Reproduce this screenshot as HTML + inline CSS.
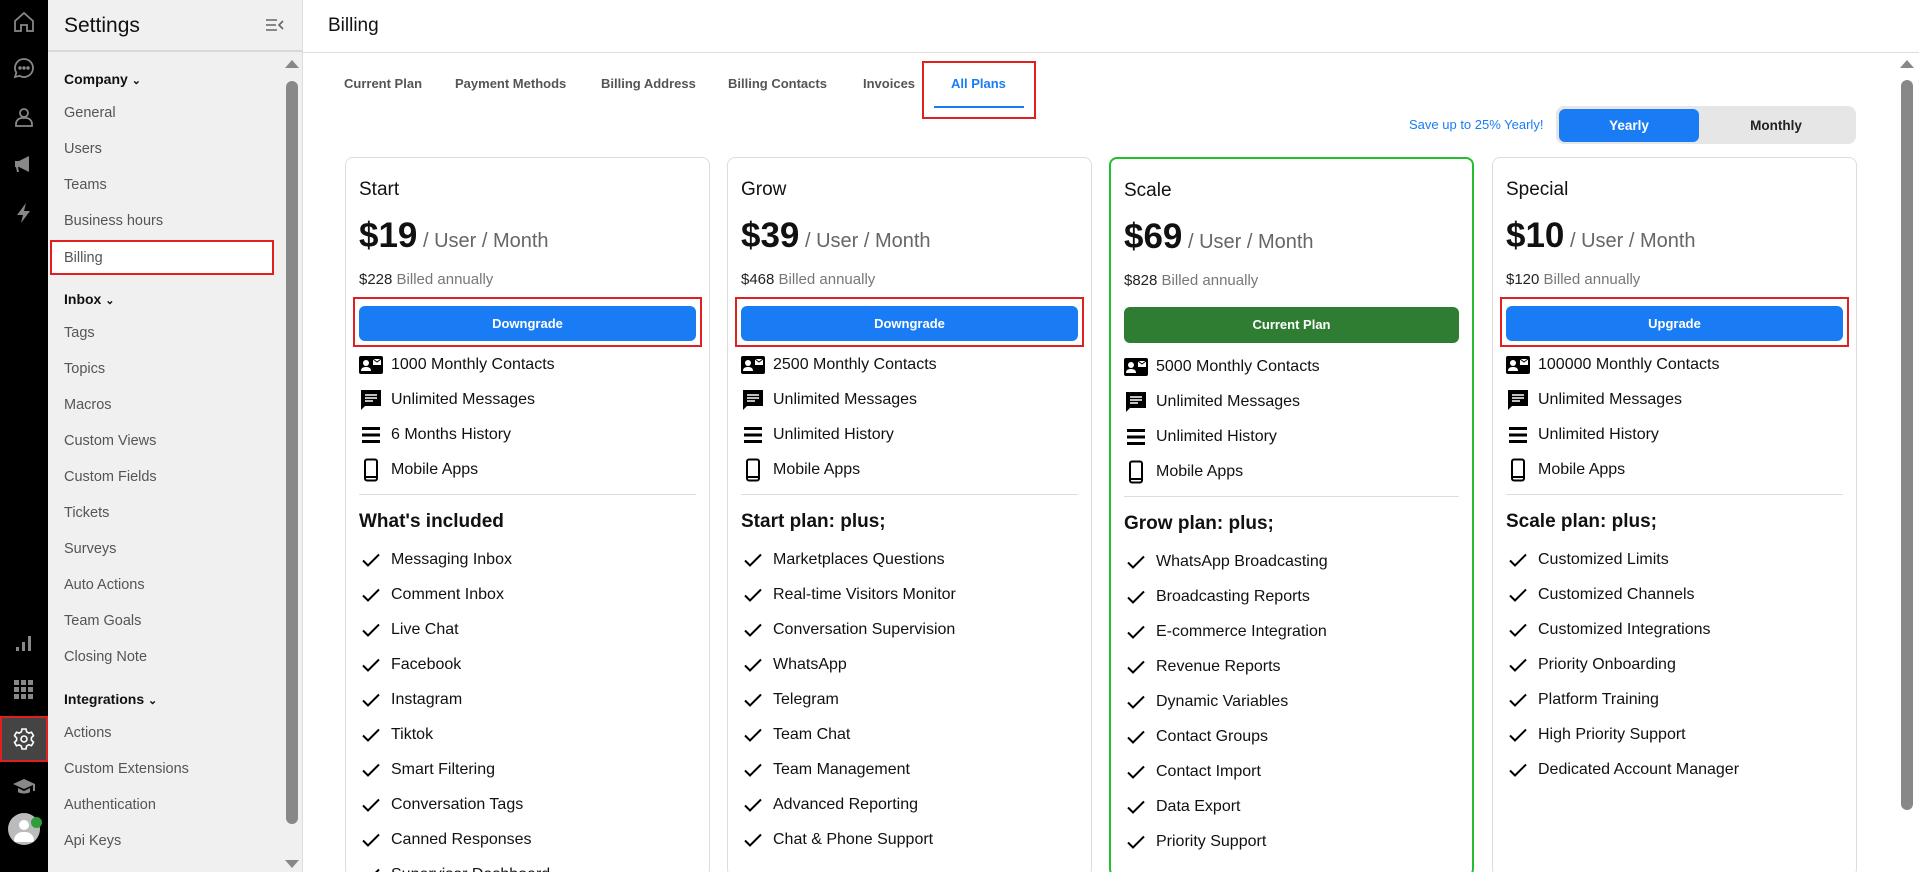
<!DOCTYPE html>
<html style="width:1919px;height:872px;overflow:hidden"><head><meta charset="utf-8"><style>
*{box-sizing:border-box;margin:0;padding:0}
body{width:1919px;height:872px;overflow:hidden;font-family:"Liberation Sans",Arial,sans-serif;background:#fff;position:relative;color:#111}
.rail{position:absolute;left:0;top:0;width:48px;height:872px;background:#000}
.rail svg{position:absolute;left:12px;width:24px;height:24px}
.side{position:absolute;left:48px;top:0;width:255px;height:872px;background:#f0f0f0;border-right:1px solid #ddd;overflow:hidden}
.side .hd{height:52px;border-bottom:2px solid #d8d8d8;font-size:21px;padding:14px 0 0 16px;color:#111}
.side .it{position:absolute;left:16px;font-size:14.5px;color:#555;transform:translateY(-50%)}
.side .grp{position:absolute;left:16px;font-size:14px;font-weight:bold;color:#111;transform:translateY(-50%)}
.main{position:absolute;left:303px;top:0;right:0;height:872px}
.mh{height:53px;border-bottom:1px solid #ddd;font-size:19px;padding:15px 0 0 25px}
.tab{position:absolute;top:76px;font-size:13px;font-weight:bold;color:#555}
.card{position:absolute;top:157px;width:365px;height:720px;border:1px solid #ddd;border-radius:8px;padding:0 13px;overflow:hidden}
.t{margin-top:21px;height:24px;font-size:19px}
.p{height:44px;margin-top:13px;font-size:35px;font-weight:bold;white-space:nowrap}
.p span{font-size:20px;color:#666;font-weight:normal}
.b{height:20px;margin-top:11px;font-size:15px;color:#222}
.b span{color:#777}
.btn{margin-top:15px;height:35px;border-radius:6px;background:#1a7cf5;color:#fff;font-weight:bold;font-size:13px;text-align:center;line-height:35px}
.f{height:35px;display:flex;align-items:center;font-size:16px;color:#111}
.f svg{width:24px;height:24px;margin-right:8px;flex:none}
.fs{margin-top:6px}
.dv{height:1px;background:#ddd;margin-top:7px}
.h{margin-top:13px;height:28px;line-height:28px;font-size:19px;font-weight:bold}
.rb{position:absolute;border:2px solid #e02020}
</style></head><body>
<div class="rail">
<svg style="top:10px" viewBox="0 0 24 24" fill="none" stroke="#888" stroke-width="1.8"><path d="M3 11 12 3l9 8v10h-6v-6H9v6H3z"/></svg>
<svg style="top:56px" viewBox="0 0 24 24" fill="none" stroke="#888" stroke-width="1.8"><path d="M12 3a9 9 0 1 1-4.5 16.8L3 21l1.3-4.3A9 9 0 0 1 12 3z"/><circle cx="8" cy="12" r=".8" fill="#888"/><circle cx="12" cy="12" r=".8" fill="#888"/><circle cx="16" cy="12" r=".8" fill="#888"/></svg>
<svg style="top:105px" viewBox="0 0 24 24" fill="none" stroke="#888" stroke-width="1.8"><circle cx="12" cy="8" r="4"/><path d="M4 21v-2a6 6 0 0 1 6-6h4a6 6 0 0 1 6 6v2z"/></svg>
<svg style="top:152px" viewBox="0 0 24 24" fill="#888"><path d="M3 9h4l10-5v16L7 15H6l1 5H5l-1-5H3z"/></svg>
<svg style="top:201px" viewBox="0 0 24 24" fill="#888"><path d="M14 2 5 14h6l-2 8 9-12h-6z"/></svg>
<svg style="top:631px" viewBox="0 0 24 24" fill="#888"><rect x="4" y="16" width="3" height="4"/><rect x="10" y="11" width="3" height="9"/><rect x="16" y="5" width="3" height="15"/></svg>
<svg style="top:678px" viewBox="0 0 24 24" fill="#888"><rect x="2" y="2" width="5" height="5"/><rect x="9" y="2" width="5" height="5"/><rect x="16" y="2" width="5" height="5"/><rect x="2" y="9" width="5" height="5"/><rect x="9" y="9" width="5" height="5"/><rect x="16" y="9" width="5" height="5"/><rect x="2" y="16" width="5" height="5"/><rect x="9" y="16" width="5" height="5"/><rect x="16" y="16" width="5" height="5"/></svg>
<div style="position:absolute;left:0;top:716px;width:48px;height:46px;background:#444;border:2px solid #e02020"></div>
<svg style="top:727px" viewBox="0 0 24 24" fill="none" stroke="#fff" stroke-width="1.6"><path d="M10 2h4l.6 2.8 2.2 1.3 2.7-.9 2 3.5-2.1 1.9v2.6l2.1 1.9-2 3.5-2.7-.9-2.2 1.3L14 22h-4l-.6-2.8-2.2-1.3-2.7.9-2-3.5 2.1-1.9v-2.6L2.5 8.7l2-3.5 2.7.9 2.2-1.3z"/><circle cx="12" cy="12" r="3"/></svg>
<svg style="top:775px" viewBox="0 0 24 24" fill="#888"><path d="M12 4 1 9l11 5 9-4v6h2V9zM6 13v4c2 2 10 2 12 0v-4l-6 3z"/></svg>
<div style="position:absolute;left:8px;top:813px;width:32px;height:32px;border-radius:50%;background:#bbb;overflow:hidden"><div style="position:absolute;left:11px;top:7px;width:10px;height:10px;border-radius:50%;background:#fff"></div><div style="position:absolute;left:6px;top:19px;width:20px;height:10px;border-radius:10px 10px 2px 2px;background:#fff"></div></div>
<div style="position:absolute;left:31px;top:817px;width:11px;height:11px;border-radius:50%;background:#2e9d3a"></div>
</div>
<div class="side">
<div class="hd">Settings</div>
<svg style="position:absolute;left:217px;top:17px" width="20" height="16" viewBox="0 0 20 16" fill="none" stroke="#666" stroke-width="1.6"><path d="M1 3h11M1 8h10M1 13h11M18 4l-4 4 4 4"/></svg>
<div style="position:absolute;left:237px;top:60px;width:0;height:0;border-left:7px solid transparent;border-right:7px solid transparent;border-bottom:8px solid #888"></div>
<div style="position:absolute;left:238px;top:81px;width:12px;height:743px;border-radius:6px;background:#888"></div>
<div style="position:absolute;left:237px;top:860px;width:0;height:0;border-left:7px solid transparent;border-right:7px solid transparent;border-top:8px solid #888"></div>
<div style="position:absolute;left:2px;top:240px;width:224px;height:35px;background:#fff;border:2px solid #e02020"></div>
<div class="grp" style="top:79px">Company <span style="font-size:11px">&#8964;</span></div>
<div class="it" style="top:113px">General</div>
<div class="it" style="top:149px">Users</div>
<div class="it" style="top:185px">Teams</div>
<div class="it" style="top:221px">Business hours</div>
<div class="it" style="top:258px">Billing</div>
<div class="grp" style="top:299px">Inbox <span style="font-size:11px">&#8964;</span></div>
<div class="it" style="top:333px">Tags</div>
<div class="it" style="top:369px">Topics</div>
<div class="it" style="top:405px">Macros</div>
<div class="it" style="top:441px">Custom Views</div>
<div class="it" style="top:477px">Custom Fields</div>
<div class="it" style="top:513px">Tickets</div>
<div class="it" style="top:549px">Surveys</div>
<div class="it" style="top:585px">Auto Actions</div>
<div class="it" style="top:621px">Team Goals</div>
<div class="it" style="top:657px">Closing Note</div>
<div class="grp" style="top:699px">Integrations <span style="font-size:11px">&#8964;</span></div>
<div class="it" style="top:733px">Actions</div>
<div class="it" style="top:769px">Custom Extensions</div>
<div class="it" style="top:805px">Authentication</div>
<div class="it" style="top:841px">Api Keys</div>
<div class="it" style="top:879px">Dashboard</div>
</div>
<div class="main">
<div class="mh">Billing</div>
<div class="tab" style="left:41px">Current Plan</div>
<div class="tab" style="left:152px">Payment Methods</div>
<div class="tab" style="left:298px">Billing Address</div>
<div class="tab" style="left:425px">Billing Contacts</div>
<div class="tab" style="left:560px">Invoices</div>
<div class="tab" style="left:648px;color:#1a7cf5">All Plans</div>
<div style="position:absolute;left:631px;top:106px;width:90px;height:2px;background:#1a7cf5"></div>
<div class="rb" style="left:619px;top:61px;width:114px;height:58px"></div>
<div style="position:absolute;left:1106px;top:117px;font-size:13px;color:#1a7cf5">Save up to 25% Yearly!</div>
<div style="position:absolute;left:1253px;top:106px;width:300px;height:38px;border-radius:8px;background:#e6e6e6"></div>
<div style="position:absolute;left:1256px;top:109px;width:140px;height:33px;border-radius:6px;background:#1a7cf5;color:#fff;font-weight:bold;font-size:13.5px;text-align:center;line-height:33px">Yearly</div>
<div style="position:absolute;left:1396px;top:109px;width:154px;height:33px;color:#222;font-weight:bold;font-size:13.5px;text-align:center;line-height:33px">Monthly</div>
<div style="position:absolute;left:1598px;top:80px;width:12px;height:730px;border-radius:6px;background:#888"></div>
<div style="position:absolute;left:1597px;top:60px;width:0;height:0;border-left:7px solid transparent;border-right:7px solid transparent;border-bottom:8px solid #888"></div>
</div>
<svg width="0" height="0" style="position:absolute"><defs>
<symbol id="ic" viewBox="0 0 24 24"><rect x="0" y="3" width="24" height="18" rx="2" fill="#000"/><circle cx="7" cy="10" r="3" fill="#fff"/><path d="M2 18c0-3 2-4 5-4s5 1 5 4z" fill="#fff"/><rect x="14" y="6" width="8" height="6" fill="#fff"/><path d="M14 6l4 3 4-3" stroke="#000" fill="none"/></symbol>
<symbol id="im" viewBox="0 0 24 24"><path d="M2 2h20v16H6l-4 4z" fill="#000"/><path d="M6 7h12M6 10h12M6 13h8" stroke="#fff" stroke-width="1.6"/></symbol>
<symbol id="ih" viewBox="0 0 24 24"><rect x="3" y="4" width="18" height="3" fill="#000"/><rect x="3" y="10.5" width="18" height="3" fill="#000"/><rect x="3" y="17" width="18" height="3" fill="#000"/></symbol>
<symbol id="ip" viewBox="0 0 24 24"><rect x="6" y="1.5" width="12" height="21" rx="2" fill="none" stroke="#000" stroke-width="2"/><path d="M6 19h12" stroke="#000" stroke-width="2"/></symbol>
<symbol id="ik" viewBox="0 0 24 24"><path d="M4 12.5l5 5L20 6.5" fill="none" stroke="#000" stroke-width="2"/></symbol>
</defs></svg>

<div class="card" style="left:345px">
<div class="t">Start</div><div class="p">$19<span> / User / Month</span></div><div class="b">$228 <span>Billed annually</span></div><div class="btn">Downgrade</div>
<div class="fs"><div class="f"><svg><use href="#ic"/></svg>1000 Monthly Contacts</div><div class="f"><svg><use href="#im"/></svg>Unlimited Messages</div><div class="f"><svg><use href="#ih"/></svg>6 Months History</div><div class="f"><svg><use href="#ip"/></svg>Mobile Apps</div></div>
<div class="dv"></div><div class="h">What's included</div>
<div class="fs"><div class="f"><svg><use href="#ik"/></svg>Messaging Inbox</div><div class="f"><svg><use href="#ik"/></svg>Comment Inbox</div><div class="f"><svg><use href="#ik"/></svg>Live Chat</div><div class="f"><svg><use href="#ik"/></svg>Facebook</div><div class="f"><svg><use href="#ik"/></svg>Instagram</div><div class="f"><svg><use href="#ik"/></svg>Tiktok</div><div class="f"><svg><use href="#ik"/></svg>Smart Filtering</div><div class="f"><svg><use href="#ik"/></svg>Conversation Tags</div><div class="f"><svg><use href="#ik"/></svg>Canned Responses</div><div class="f"><svg><use href="#ik"/></svg>Supervisor Dashboard</div></div>
</div>
<div class="card" style="left:727px">
<div class="t">Grow</div><div class="p">$39<span> / User / Month</span></div><div class="b">$468 <span>Billed annually</span></div><div class="btn">Downgrade</div>
<div class="fs"><div class="f"><svg><use href="#ic"/></svg>2500 Monthly Contacts</div><div class="f"><svg><use href="#im"/></svg>Unlimited Messages</div><div class="f"><svg><use href="#ih"/></svg>Unlimited History</div><div class="f"><svg><use href="#ip"/></svg>Mobile Apps</div></div>
<div class="dv"></div><div class="h">Start plan: plus;</div>
<div class="fs"><div class="f"><svg><use href="#ik"/></svg>Marketplaces Questions</div><div class="f"><svg><use href="#ik"/></svg>Real-time Visitors Monitor</div><div class="f"><svg><use href="#ik"/></svg>Conversation Supervision</div><div class="f"><svg><use href="#ik"/></svg>WhatsApp</div><div class="f"><svg><use href="#ik"/></svg>Telegram</div><div class="f"><svg><use href="#ik"/></svg>Team Chat</div><div class="f"><svg><use href="#ik"/></svg>Team Management</div><div class="f"><svg><use href="#ik"/></svg>Advanced Reporting</div><div class="f"><svg><use href="#ik"/></svg>Chat &amp; Phone Support</div></div>
</div>
<div class="card" style="left:1109px;border:2px solid #22c02e;padding:0 13px">
<div class="t">Scale</div><div class="p">$69<span> / User / Month</span></div><div class="b">$828 <span>Billed annually</span></div><div class="btn" style="background:#2e7d32;height:36px;line-height:36px">Current Plan</div>
<div class="fs"><div class="f"><svg><use href="#ic"/></svg>5000 Monthly Contacts</div><div class="f"><svg><use href="#im"/></svg>Unlimited Messages</div><div class="f"><svg><use href="#ih"/></svg>Unlimited History</div><div class="f"><svg><use href="#ip"/></svg>Mobile Apps</div></div>
<div class="dv"></div><div class="h">Grow plan: plus;</div>
<div class="fs"><div class="f"><svg><use href="#ik"/></svg>WhatsApp Broadcasting</div><div class="f"><svg><use href="#ik"/></svg>Broadcasting Reports</div><div class="f"><svg><use href="#ik"/></svg>E-commerce Integration</div><div class="f"><svg><use href="#ik"/></svg>Revenue Reports</div><div class="f"><svg><use href="#ik"/></svg>Dynamic Variables</div><div class="f"><svg><use href="#ik"/></svg>Contact Groups</div><div class="f"><svg><use href="#ik"/></svg>Contact Import</div><div class="f"><svg><use href="#ik"/></svg>Data Export</div><div class="f"><svg><use href="#ik"/></svg>Priority Support</div></div>
</div>
<div class="card" style="left:1492px">
<div class="t">Special</div><div class="p">$10<span> / User / Month</span></div><div class="b">$120 <span>Billed annually</span></div><div class="btn">Upgrade</div>
<div class="fs"><div class="f"><svg><use href="#ic"/></svg>100000 Monthly Contacts</div><div class="f"><svg><use href="#im"/></svg>Unlimited Messages</div><div class="f"><svg><use href="#ih"/></svg>Unlimited History</div><div class="f"><svg><use href="#ip"/></svg>Mobile Apps</div></div>
<div class="dv"></div><div class="h">Scale plan: plus;</div>
<div class="fs"><div class="f"><svg><use href="#ik"/></svg>Customized Limits</div><div class="f"><svg><use href="#ik"/></svg>Customized Channels</div><div class="f"><svg><use href="#ik"/></svg>Customized Integrations</div><div class="f"><svg><use href="#ik"/></svg>Priority Onboarding</div><div class="f"><svg><use href="#ik"/></svg>Platform Training</div><div class="f"><svg><use href="#ik"/></svg>High Priority Support</div><div class="f"><svg><use href="#ik"/></svg>Dedicated Account Manager</div></div>
</div>
<div class="rb" style="left:353px;top:297px;width:349px;height:50px"></div>
<div class="rb" style="left:735px;top:297px;width:349px;height:50px"></div>
<div class="rb" style="left:1500px;top:297px;width:349px;height:50px"></div>
</body></html>
